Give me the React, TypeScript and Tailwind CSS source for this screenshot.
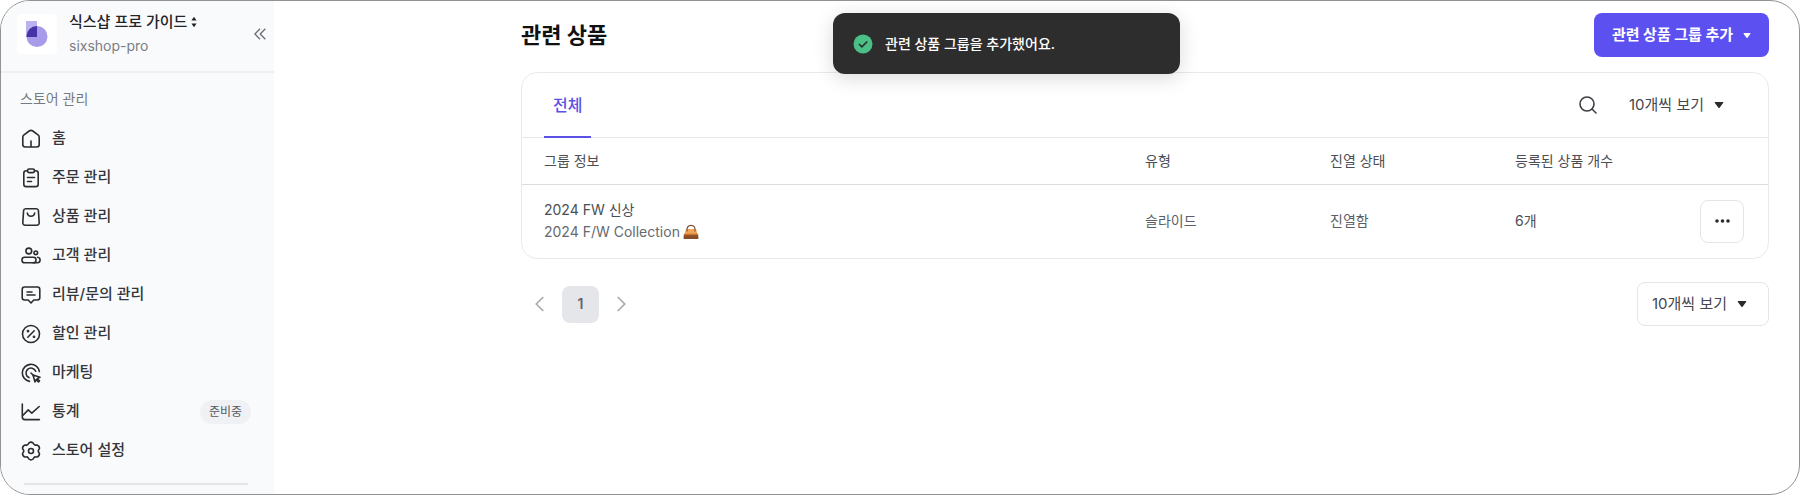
import type { ReactNode } from "react";

const Icon = ({ children }: { children: ReactNode }) => (
  <svg
    viewBox="0 0 20 20"
    className="h-5 w-5 shrink-0"
    fill="none"
    stroke="#2b2d31"
    strokeWidth="1.6"
    strokeLinecap="round"
    strokeLinejoin="round"
    aria-hidden="true"
  >
    {children}
  </svg>
);

const Caret = ({ className }: { className: string }) => (
  <svg viewBox="0 0 10 8" className={className} fill="currentColor" aria-hidden="true">
    <path d="M1.4 1h7.2c.6 0 .9.6.5 1.1L5.6 6.7c-.3.4-.9.4-1.2 0L.9 2.1C.5 1.6.8 1 1.4 1Z" />
  </svg>
);

const menu: { label: string; badge?: string; icon: ReactNode }[] = [
  {
    label: "홈",
    icon: (
      <>
        <path d="M1.8 8.2c0-1 .4-1.700 1.200-2.300l5.200-3.900c1.100-.8 2.500-.8 3.600 0L17 5.900c.8.6 1.200 1.300 1.200 2.300v7.300c0 1.500-1 2.500-2.500 2.500H4.300c-1.500 0-2.500-1-2.500-2.500Z" />
        <path d="M10 12v5.500" />
      </>
    ),
  },
  {
    label: "주문 관리",
    icon: (
      <>
        <path d="M6.500 2.800H5.200c-1.400 0-2.400 1-2.400 2.400v11c0 1.400 1 2.400 2.400 2.400h9.600c1.400 0 2.400-1 2.400-2.400v-11c0-1.400-1-2.400-2.400-2.400h-1.300" />
        <rect x="6.500" y="1" width="7" height="3.600" rx="1.600" />
        <path d="M6.500 9.500h7M6.500 13.500h4" />
      </>
    ),
  },
  {
    label: "상품 관리",
    icon: (
      <>
        <path d="M4.600 1.800h10.800c1.100 0 1.900.7 2 1.800l.8 12c.1 1.500-.9 2.600-2.400 2.600H4.200c-1.500 0-2.500-1.100-2.400-2.600l.8-12c.1-1.100.9-1.800 2-1.800Z" />
        <path d="M6.300 6c.3 2 1.700 3.300 3.700 3.300s3.400-1.300 3.700-3.300" />
      </>
    ),
  },
  {
    label: "고객 관리",
    icon: (
      <>
        <circle cx="7.800" cy="5" r="2.900" />
        <circle cx="14.800" cy="6.800" r="1.800" />
        <rect x="1" y="11.200" width="14" height="5.600" rx="2.600" />
        <path d="M16.600 11.300c1.500.2 2.500 1.300 2.500 2.700 0 1.600-1.200 2.800-2.800 2.800H12" />
      </>
    ),
  },
  {
    label: "리뷰/문의 관리",
    icon: (
      <>
        <path d="M3.600 2h12.800c1.500 0 2.400.9 2.400 2.400v8.200c0 1.500-.9 2.400-2.400 2.400h-3.600L10 18l-2.800-3H3.600c-1.500 0-2.400-.9-2.400-2.400V4.400C1.200 2.900 2.100 2 3.600 2Z" />
        <path d="M6 7h5M6 10h8" />
      </>
    ),
  },
  {
    label: "할인 관리",
    icon: (
      <>
        <circle cx="10" cy="10" r="8.500" />
        <path d="m6.800 13.200 6.400-6.400" />
        <circle cx="7" cy="7.200" r=".6" />
        <circle cx="13" cy="12.800" r=".6" />
      </>
    ),
  },
  {
    label: "마케팅",
    icon: (
      <>
        <path d="M8.500 18.400A8.600 8.600 0 1 1 18.400 8.500" />
        <path d="M8 14.600A5 5 0 1 1 14.700 8.300" />
        <path d="m10 10 2 2" />
        <path d="m12 12 7 2.300-2.700 1.300 2.200 2.400-1 1-2.400-2.300-1.100 2.300Z" />
      </>
    ),
  },
  {
    label: "통계",
    badge: "준비중",
    icon: (
      <>
        <path d="M1.300 2v13c0 1.700.9 2.600 2.600 2.600h14.500" />
        <path d="m1.800 13.500 5.400-5.600 3.600 3.200L18.200 4.500" />
      </>
    ),
  },
  {
    label: "스토어 설정",
    icon: (
      <>
        <path d="M7.900 2Q10 .2 12.100 2L13 3.400Q13.500 4.200 14.500 4.100L16 4Q18.700 5 18.400 7.600L17.500 9.100Q17 10 17.500 10.900L18.400 12.400Q18.700 15 16 16L14.500 15.900Q13.500 15.800 13 16.600L12.100 18Q10 19.800 7.900 18L7 16.600Q6.500 15.800 5.500 15.900L4 16Q1.300 15 1.600 12.400L2.500 10.900Q3 10 2.500 9.100L1.600 7.600Q1.300 5 4 4L5.500 4.100Q6.500 4.200 7 3.400Z" />
        <circle cx="10" cy="10" r="2.500" />
      </>
    ),
  },
];

const PageSize = ({ className }: { className: string }) => (
  <div className={`grid items-center ${className}`}>
    <select
      aria-label="페이지당 개수"
      className="col-start-1 row-start-1 h-full appearance-none bg-transparent pr-5 text-[15px] text-[#44474d] outline-none"
    >
      <option>10개씩 보기</option>
    </select>
    <Caret className="pointer-events-none col-start-1 row-start-1 h-2 w-[10px] justify-self-end text-[#2b2b2b]" />
  </div>
);

const Sidebar = () => (
  <aside className="flex w-[273px] shrink-0 flex-col bg-[#f9fafc]">
    <div className="flex h-[72px] items-center gap-3 border-b-2 border-[#eeeff2] pr-2 pb-1 pl-4">
      <span className="flex h-10 w-10 shrink-0 items-center justify-center rounded bg-white">
        <svg viewBox="0 0 22 26" className="h-[26px] w-[22px]" aria-hidden="true">
          <rect width="11" height="16" fill="#bab1f0" />
          <circle cx="11" cy="15.500" r="10.500" fill="#a79bea" />
          <path d="M11 5v11H.5v-.5A10.500 10.500 0 0 1 11 5Z" fill="#4434a6" />
        </svg>
      </span>
      <div className="min-w-0 flex-1">
        <button type="button" className="flex items-center gap-1 text-[15px] leading-6 font-medium text-[#222427]">
          식스샵 프로 가이드
          <svg viewBox="0 0 6 12" className="h-3 w-[6px]" fill="currentColor" aria-hidden="true">
            <path d="M3 .8 5.600 4.500H.4ZM3 11.200.4 7.500h5.200Z" />
          </svg>
        </button>
        <p className="text-sm leading-6 text-[#7b7e85]">sixshop-pro</p>
      </div>
      <button type="button" aria-label="사이드바 접기" className="text-[#6f7278]">
        <svg viewBox="0 0 12 12" className="h-3 w-3" fill="none" stroke="currentColor" strokeWidth="1.400" aria-hidden="true">
          <path d="M6 .7.900 6 6 11.300M11.300.7 6.200 6l5.100 5.300" />
        </svg>
      </button>
    </div>
    <h2 className="px-[19px] pt-[15px] pb-[9px] text-sm leading-[22px] text-[#777a80]">스토어 관리</h2>
    <nav className="flex flex-col">
      {menu.map(({ label, icon, badge }) => (
        <a key={label} href="#" className="flex h-[39px] items-center gap-[11px] pr-[23px] pl-5">
          <Icon>{icon}</Icon>
          <span className="flex-1 text-[15px] font-medium text-[#33363b]">{label}</span>
          {badge && (
            <span className="rounded-full bg-[#f0f1f4] px-[9px] text-xs leading-6 text-[#56595f]">{badge}</span>
          )}
        </a>
      ))}
    </nav>
    <hr className="mt-[13px] mr-[26px] ml-[23px] border-t-2 border-[#e4e5e9]" />
  </aside>
);

const Bag = () => (
  <svg viewBox="0 0 16 16" className="h-4 w-4" role="img" aria-label="핸드백">
    <path d="M3.800 7C3.800 3.200 5.200 1.300 8 1.300S12.200 3.200 12.200 7" fill="none" stroke="#7b4a35" strokeWidth="1.200" />
    <path d="M3 5h10l2 7H1Z" fill="#f0a255" />
    <path d="M1 10h14l.5 4.200c0 .5-.3.800-.8.800H1.300c-.5 0-.8-.3-.8-.8Z" fill="#8a4c27" />
    <path d="M.9 9.800h14.200v1.400H.8Z" fill="#c4742f" />
    <path d="M4 5v2.500M12 5v2.500" stroke="#7b4a35" strokeWidth="1" />
  </svg>
);

export default function App() {
  return (
    <div className="flex min-h-screen bg-white pb-px font-['Inter','Noto_Sans_CJK_KR',sans-serif]">
      <div className="relative flex flex-1 overflow-hidden rounded-[30px] border border-[#929292]">
        <Sidebar />
        <main className="min-w-0 flex-1 pr-[30px] pl-[247px]">
          <header className="flex items-center justify-between pt-3 pb-[15px]">
            <h1 className="text-[22px] font-bold text-[#111]">관련 상품</h1>
            <button
              type="button"
              className="flex h-11 items-center gap-[10px] rounded-lg bg-[#5d50f0] px-[18px] text-[15px] font-bold text-white"
            >
              관련 상품 그룹 추가
              <Caret className="h-[7px] w-2" />
            </button>
          </header>

          <section className="rounded-2xl border border-[#e9eaec]">
            <div className="flex h-[65px] items-stretch justify-between border-b border-[#e6e7e9] pr-11 pl-[22px]">
              <button type="button" className="-mb-px border-b-2 border-[#5d50e6] px-[9px] text-base font-medium text-[#5d50e6]">
                전체
              </button>
              <div className="flex items-center gap-8">
                <button type="button" aria-label="검색" className="text-[#3c3f44]">
                  <svg viewBox="0 0 18 18" className="h-[18px] w-[18px]" fill="none" stroke="currentColor" strokeWidth="1.600" strokeLinecap="round" aria-hidden="true">
                    <circle cx="8" cy="8" r="7" />
                    <path d="m13 13 4 4" />
                  </svg>
                </button>
                <PageSize className="h-11" />
              </div>
            </div>
            <table className="w-full table-fixed text-left text-sm text-[#4b4e54]">
              <colgroup>
                <col />
                <col className="w-[185px]" />
                <col className="w-[185px]" />
                <col className="w-[185px]" />
                <col className="w-[68px]" />
              </colgroup>
              <thead>
                <tr className="h-[46px] border-b border-[#dcdde0]">
                  <th scope="col" className="pl-[22px] font-normal">그룹 정보</th>
                  <th scope="col" className="font-normal">유형</th>
                  <th scope="col" className="font-normal">진열 상태</th>
                  <th scope="col" className="font-normal">등록된 상품 개수</th>
                  <td />
                </tr>
              </thead>
              <tbody>
                <tr className="h-[74px]">
                  <td className="pl-[22px] leading-[22px]">
                    <p>2024 FW 신상</p>
                    <p className="flex items-center gap-[3px] text-[#66696f]">
                      2024 F/W Collection
                      <Bag />
                    </p>
                  </td>
                  <td className="text-[#5c5f65]">슬라이드</td>
                  <td className="text-[#5c5f65]">진열함</td>
                  <td>6개</td>
                  <td>
                    <button
                      type="button"
                      aria-label="더보기"
                      className="flex h-[43px] w-11 items-center justify-center rounded-lg border border-[#e4e5e8]"
                    >
                      <svg viewBox="0 0 15 4" className="h-1 w-[15px]" fill="#2b2b2b" aria-hidden="true">
                        <circle cx="2" cy="2" r="1.800" />
                        <circle cx="7.500" cy="2" r="1.800" />
                        <circle cx="13" cy="2" r="1.800" />
                      </svg>
                    </button>
                  </td>
                </tr>
              </tbody>
            </table>
          </section>

          <footer className="flex items-center justify-between pt-[23px]">
            <nav aria-label="페이지" className="flex items-center gap-[18px] pl-[14px] text-[#a9abb0]">
              <button type="button" aria-label="이전">
                <svg viewBox="0 0 9 16" className="h-4 w-[9px]" fill="none" stroke="currentColor" strokeWidth="1.700" aria-hidden="true">
                  <path d="M8.300 1 1.300 8l7 7" />
                </svg>
              </button>
              <button type="button" className="h-[37px] w-[37px] rounded-lg bg-[#e5e6ea] text-sm font-semibold text-[#66636c]">
                1
              </button>
              <button type="button" aria-label="다음">
                <svg viewBox="0 0 9 16" className="h-4 w-[9px]" fill="none" stroke="currentColor" strokeWidth="1.700" aria-hidden="true">
                  <path d="m.7 1 7 7-7 7" />
                </svg>
              </button>
            </nav>
            <PageSize className="h-11 rounded-lg border border-[#e4e5e8] pr-[21px] pl-[14px]" />
          </footer>
        </main>

        <div
          role="status"
          className="absolute top-3 left-[832px] flex h-[61px] w-[347px] items-center gap-3 rounded-xl bg-[#2d2d2d] px-5 text-sm font-medium text-white shadow-[0_4px_20px_rgba(0,0,0,0.15)]"
        >
          <svg viewBox="0 0 20 20" className="h-5 w-5" aria-hidden="true">
            <circle cx="10" cy="10" r="9.500" fill="#4abf86" />
            <path d="m6 10 2.900 2.900L14.200 7.500" fill="none" stroke="#2d2d2d" strokeWidth="1.700" />
          </svg>
          관련 상품 그룹을 추가했어요.
        </div>
      </div>
    </div>
  );
}
